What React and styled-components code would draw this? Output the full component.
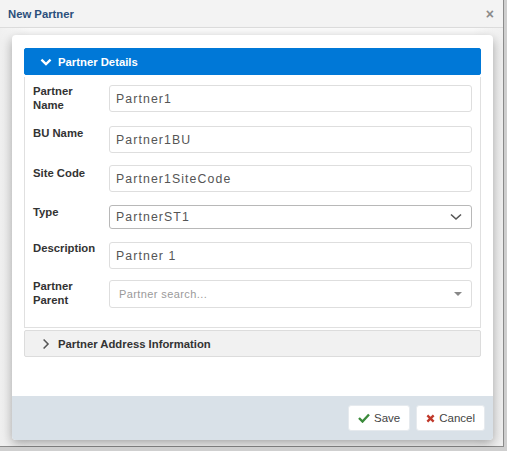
import React from 'react'
import styled, { createGlobalStyle } from 'styled-components'

const GlobalStyle = createGlobalStyle`
  html, body {
    margin: 0;
    padding: 0;
    background: #cfcfcf;
    font-family: "Liberation Sans", Arial, sans-serif;
  }
`

const Window = styled.div`
  width: 503px;
  height: 446px;
  background: #f4f4f4;
  border-right: 1px solid #8c8c8c;
  border-bottom: 1px solid #8c8c8c;
  display: flex;
  flex-direction: column;
`

const TitleBar = styled.div`
  height: 27px;
  flex-shrink: 0;
  background: #f3f3f3;
  border-bottom: 1px solid #dcdcdc;
  display: flex;
  align-items: center;
  justify-content: space-between;
  padding: 0 9px 0 8px;
`

const Title = styled.span`
  font-size: 11.3px;
  font-weight: bold;
  color: #2b4f7c;
`

const Close = styled.span`
  font-size: 14px;
  font-weight: bold;
  color: #8a8a8a;
  line-height: 1;
`

const Body = styled.div`
  flex: 1;
  padding: 7px 10px 6px 12px;
  background: linear-gradient(to right, #f0f0f0, #fbfbfb 6%, #fbfbfb 94%, #f0f0f0);
`

const Card = styled.div`
  width: 481px;
  height: 405px;
  background: #fff;
  border-radius: 4px;
  box-shadow: 0 4px 12px rgba(0, 0, 0, 0.35);
  display: flex;
  flex-direction: column;
  overflow: hidden;
`

const Content = styled.div`
  flex: 1;
  padding: 13px 12px 0 12px;
`

const SectionHead = styled.div`
  height: 27px;
  display: flex;
  align-items: center;
  gap: 6px;
  padding-left: 15px;
  font-size: 11.3px;
  font-weight: bold;
  border-radius: 2px;
  background: ${p => (p.$open ? '#0078d7' : '#f1f1f1')};
  color: ${p => (p.$open ? '#fff' : '#333')};
  border: 1px solid ${p => (p.$open ? '#0078d7' : '#dcdcdc')};
  box-sizing: border-box;
  margin-top: ${p => (p.$open ? '0' : '2px')};
`

const Form = styled.div`
  border: 1px solid #e0e0e0;
  border-top: none;
  margin-top: 2px;
  padding: 8px 8px 19px 8px;
  display: flex;
  flex-direction: column;
`

const Row = styled.div`
  display: flex;
  align-items: flex-start;
  margin-bottom: ${p => p.$mb || 0}px;
`

const Label = styled.label`
  width: 64px;
  margin-right: 12px;
  flex-shrink: 0;
  font-size: 11.3px;
  font-weight: bold;
  color: #333;
  line-height: 13.5px;
  padding-top: ${p => p.$top || 0}px;
`

const Field = styled.div`
  flex: 1;
  height: ${p => p.$h || 27}px;
  box-sizing: border-box;
  border: 1px solid ${p => (p.$dark ? '#b8b8b8' : '#dedede')};
  border-radius: 3px;
  background: #fff;
  display: flex;
  align-items: center;
  justify-content: space-between;
  padding: 0 8px 0 ${p => (p.$placeholder ? 9 : 6)}px;
  font-size: ${p => (p.$placeholder ? 11 : 12.3)}px;
  letter-spacing: ${p => (p.$placeholder ? 0.4 : 1.1)}px;
  color: ${p => (p.$placeholder ? '#9a9a9a' : '#555')};
`

const Footer = styled.div`
  height: 44px;
  flex-shrink: 0;
  background: #d9e1e8;
  display: flex;
  align-items: center;
  justify-content: flex-end;
  gap: 6px;
  padding-right: 8px;
`

const Button = styled.button`
  height: 26px;
  background: #fff;
  border: 1px solid #e6eaee;
  border-radius: 3px;
  font-family: inherit;
  font-size: 11.5px;
  color: #444;
  display: flex;
  align-items: center;
  gap: 4px;
  padding: 0 9px;
`

const Chevron = ({ dir, color }) => (
  <svg width="12" height="12" viewBox="0 0 10 10">
    {dir === 'down' ? (
      <path d="M1.2 3 L5 6.8 L8.8 3" fill="none" stroke={color} strokeWidth="1.9" />
    ) : (
      <path d="M3 1.3 L6.7 5 L3 8.7" fill="none" stroke={color} strokeWidth="1.3" />
    )}
  </svg>
)

const rows = [
  { label: 'Partner Name', value: 'Partner1', mb: 14 },
  { label: 'BU Name', value: 'Partner1BU', mb: 12, top: 1 },
  { label: 'Site Code', value: 'Partner1SiteCode', mb: 13, top: 2 },
  { label: 'Type', value: 'PartnerST1', select: true, h: 24, mb: 13, top: 1 },
  { label: 'Description', value: 'Partner 1', mb: 11 },
  { label: 'Partner Parent', value: 'Partner search...', placeholder: true, h: 28, mb: 0 },
]

export default function App() {
  return (
    <>
      <GlobalStyle />
      <Window>
        <TitleBar>
          <Title>New Partner</Title>
          <Close>×</Close>
        </TitleBar>
        <Body>
          <Card>
            <Content>
              <SectionHead $open>
                <Chevron dir="down" color="#fff" />
                Partner Details
              </SectionHead>
              <Form>
                {rows.map(r => (
                  <Row key={r.label} $mb={r.mb}>
                    <Label $top={r.top}>{r.label}</Label>
                    <Field $h={r.h} $dark={r.select} $placeholder={r.placeholder}>
                      {r.value}
                      {r.select && (
                        <svg width="14" height="10" viewBox="0 0 14 10">
                          <path d="M2 2.5 L7 7 L12 2.5" fill="none" stroke="#555" strokeWidth="1.6" />
                        </svg>
                      )}
                      {r.placeholder && (
                        <svg width="10" height="6" viewBox="0 0 10 6">
                          <path d="M1 1 L9 1 L5 5 Z" fill="#888" />
                        </svg>
                      )}
                    </Field>
                  </Row>
                ))}
              </Form>
              <SectionHead>
                <Chevron dir="right" color="#555" />
                Partner Address Information
              </SectionHead>
            </Content>
            <Footer>
              <Button>
                <svg width="12" height="10" viewBox="0 0 12 10">
                  <path d="M1 5 L4.5 8.5 L11 1.5" fill="none" stroke="#3a8a3a" strokeWidth="2.4" />
                </svg>
                Save
              </Button>
              <Button>
                <svg width="9" height="9" viewBox="0 0 10 10">
                  <path d="M1.5 1.5 L8.5 8.5 M8.5 1.5 L1.5 8.5" stroke="#c0392b" strokeWidth="2.6" />
                </svg>
                Cancel
              </Button>
            </Footer>
          </Card>
        </Body>
      </Window>
    </>
  )
}
